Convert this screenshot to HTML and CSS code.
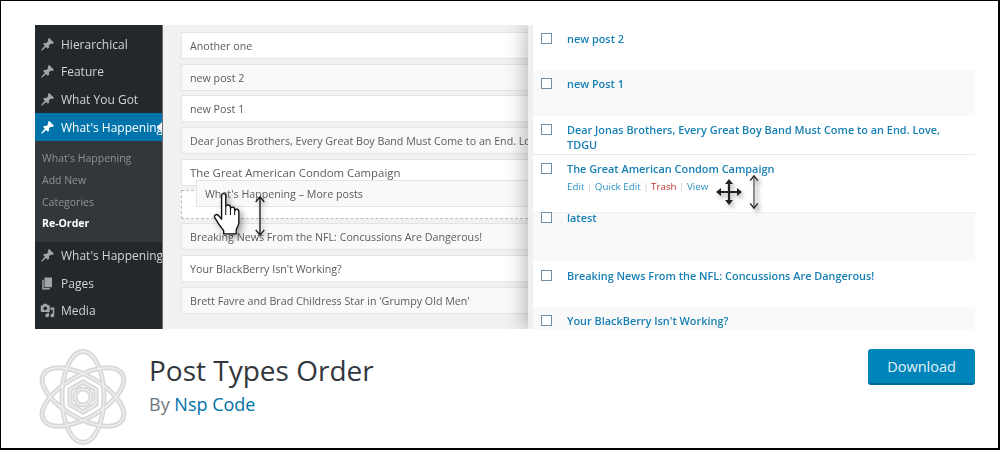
FILE: index.html
```html
<!DOCTYPE html>
<html lang="en">
<head>
<meta charset="utf-8">
<title>Post Types Order</title>
<link rel="stylesheet" href="styles.css">
</head>
<body>
<div class="frame">
  <svg width="0" height="0" class="defs">
    <defs>
      <path id="pin" d="M10.44 3.02l1.82-1.82 6.36 6.35-1.83 1.82c-1.05-.68-2.48-.57-3.41.36l-.75.75c-.92.93-1.04 2.35-.35 3.41l-1.83 1.82-2.41-2.41-2.8 2.79c-.42.42-3.38 2.71-3.8 2.29s1.86-3.39 2.28-3.81l2.79-2.79L4.1 9.36l1.83-1.82c1.05.69 2.48.57 3.4-.36l.75-.75c.93-.92 1.05-2.35.36-3.41z"/>
    </defs>
  </svg>
  <div class="banner">
    <nav class="sidebar">
      <div class="menu-item"><svg class="mi" viewBox="0 0 20 20"><use href="#pin"/></svg><span>Hierarchical</span></div>
      <div class="menu-item"><svg class="mi" viewBox="0 0 20 20"><use href="#pin"/></svg><span>Feature</span></div>
      <div class="menu-item"><svg class="mi" viewBox="0 0 20 20"><use href="#pin"/></svg><span>What You Got</span></div>
      <div class="menu-item active"><svg class="mi" viewBox="0 0 20 20"><use href="#pin"/></svg><span>What's Happening</span></div>
      <div class="submenu">
        <div class="sub-item">What's Happening</div>
        <div class="sub-item">Add New</div>
        <div class="sub-item">Categories</div>
        <div class="sub-item current">Re-Order</div>
      </div>
      <div class="menu-item"><svg class="mi" viewBox="0 0 20 20"><use href="#pin"/></svg><span>What's Happening</span></div>
      <div class="menu-item"><svg class="mi" viewBox="0 0 20 20"><path d="M6 15V2h10v13H6zm-1 1h8v2H3V5h2v11z"/></svg><span>Pages</span></div>
      <div class="menu-item"><svg class="mi" viewBox="0 0 20 20"><path d="M13 11V4c0-.55-.45-1-1-1h-1.67L9 1H5L3.67 3H2c-.55 0-1 .45-1 1v7c0 .55.45 1 1 1h10c.55 0 1-.45 1-1zM7 4.5c1.38 0 2.5 1.12 2.5 2.5S8.38 9.5 7 9.5 4.5 8.38 4.5 7 5.62 4.5 7 4.5zM14 6h5v10.5c0 1.38-1.12 2.5-2.5 2.5S14 17.88 14 16.5s1.12-2.5 2.5-2.5c.17 0 .34.02.5.05V9h-3V6zm-4 8.05V13h2v3.5c0 1.38-1.12 2.5-2.5 2.5S7 17.88 7 16.5 8.12 14 9.5 14c.17 0 .34.02.5.05z"/></svg><span>Media</span></div>
    </nav>

    <section class="order">
      <div class="card">Another one</div>
      <div class="card alt">new post 2</div>
      <div class="card">new Post 1</div>
      <div class="card alt">Dear Jonas Brothers, Every Great Boy Band Must Come to an End. Love, TDGU</div>
      <div class="card wide">The Great American Condom Campaign</div>
      <div class="placeholder"></div>
      <div class="card alt">Breaking News From the NFL: Concussions Are Dangerous!</div>
      <div class="card">Your BlackBerry Isn't Working?</div>
      <div class="card alt">Brett Favre and Brad Childress Star in 'Grumpy Old Men'</div>
      <div class="card dragged">What's Happening – More posts</div>
    </section>

    <section class="list">
      <div class="row r1"><i class="check"></i><div class="title">new post 2</div></div>
      <div class="row r2 odd"><i class="check"></i><div class="title">new Post 1</div></div>
      <div class="row r3"><i class="check"></i><div class="title">Dear Jonas Brothers, Every Great Boy Band Must Come to an End. Love, TDGU</div></div>
      <div class="row r4"><i class="check"></i><div><div class="title">The Great American Condom Campaign</div>
        <div class="actions"><span>Edit</span><b>|</b><span>Quick Edit</span><b>|</b><span class="trash">Trash</span><b>|</b><span>View</span></div></div></div>
      <div class="row r5 odd"><i class="check"></i><div class="title">latest</div></div>
      <div class="row r6"><i class="check"></i><div class="title">Breaking News From the NFL: Concussions Are Dangerous!</div></div>
      <div class="row r7 odd"><i class="check"></i><div class="title">Your BlackBerry Isn't Working?</div></div>
    </section>

    <svg class="cursor hand" viewBox="0 0 36 44">
      <path class="hand-path" d="M9 3.5c0-2.600 4-2.600 4 0V14c0-2.200 4.500-2.200 4.500 .5V16c0-2.200 4-2.200 4 .5V18c0-2.200 4-2 4 .8V29c0 3-1.500 5-2.500 7v4H11v-3c-2-2.500-6-8-8.500-12.500-1.300-2.500 1.700-4 3.500-2l3 3.500z"/>
      <path class="hand-line" d="M13 14v8M17.500 15v7M21.500 17v5"/>
    </svg>
    <svg class="cursor arrow-a" viewBox="0 0 14 44">
      <path class="arr" d="M7 2V42M2.500 7.500L7 2l4.500 5.500M2.500 36.500L7 42l4.500-5.500"/>
    </svg>
    <svg class="cursor arrow-b" viewBox="0 0 14 40">
      <path class="arr-gray" d="M7 3V37"/>
      <path class="arr" d="M3 8L7 3l4 5M3 32l4 5 4-5"/>
    </svg>
    <svg class="cursor move" viewBox="0 0 28 28">
      <path class="mv" d="M14 3V25M3 14H25"/>
      <path class="mvh" d="M14 1l-4 5h8zM14 27l-4-5h8zM1 14l5-4v8zM27 14l-5-4v8z"/>
    </svg>
  </div>

  <footer class="plugin">
    <svg class="atom" viewBox="0 0 96 96" aria-hidden="true">
      <g class="ring-o">
        <ellipse cx="48" cy="48" rx="21" ry="45.500"/>
        <ellipse cx="48" cy="48" rx="21" ry="45.500" transform="rotate(60 48 48)"/>
        <ellipse cx="48" cy="48" rx="21" ry="45.500" transform="rotate(-60 48 48)"/>
        <path d="M48 33l13 7.500v15L48 63l-13-7.500v-15z"/>
        <circle cx="48" cy="48" r="8"/>
      </g>
      <g class="ring-i">
        <ellipse cx="48" cy="48" rx="21" ry="45.500"/>
        <ellipse cx="48" cy="48" rx="21" ry="45.500" transform="rotate(60 48 48)"/>
        <ellipse cx="48" cy="48" rx="21" ry="45.500" transform="rotate(-60 48 48)"/>
        <path d="M48 33l13 7.500v15L48 63l-13-7.500v-15z"/>
        <circle cx="48" cy="48" r="8"/>
      </g>
    </svg>
    <div class="info">
      <h1 class="name">Post Types Order</h1>
      <p class="by">By <a class="author">Nsp Code</a></p>
    </div>
    <button class="download">Download</button>
  </footer>
</div>
</body>
</html>
```
FILE: styles.css
```css
* { box-sizing: border-box; }
html, body { margin: 0; padding: 0; background: #fff; }
body { font-family: "Open Sans", "Noto Sans", sans-serif; }
.defs { position: absolute; }
.frame {
  width: 1000px;
  height: 450px;
  border: 1px solid #000;
  border-bottom-width: 2px;
  border-right-width: 2px;
  padding: 24px 23px 0 34px;
  overflow: hidden;
}
.banner {
  position: relative;
  display: flex;
  width: 940px;
  height: 304px;
  overflow: hidden;
  filter: blur(.7px);
  background: #f1f1f1;
}

/* sidebar */
.sidebar {
  width: 128px;
  flex: none;
  background: #23282d;
  border-right: 1px solid #6b6e71;
  padding-top: 5.500px;
  font-size: 12px;
  color: #d2d4d6;
}
.menu-item {
  position: relative;
  height: 27.500px;
  display: flex;
  align-items: center;
  padding-left: 5px;
  white-space: nowrap;
  overflow: hidden;
}
.menu-item span { margin-left: 6px; }
.mi { width: 15px; height: 15px; flex: none; fill: #a0a5aa; }
.active { background: #0073aa; color: #fff; height: 28px; overflow: hidden; }
.active .mi { fill: #fff; }
.active::after {
  content: "";
  position: absolute;
  right: 0;
  top: 9px;
  border: 5px solid transparent;
  border-right-color: #f1f1f1;
  border-left-width: 0;
}
.submenu {
  background: #32373c;
  padding: 7px 0 0 7px;
  height: 101px;
  font-size: 10.500px;
  color: #8f9295;
}
.sub-item { height: 21.800px; line-height: 21px; white-space: nowrap; }
.current { color: #fff; font-weight: 700; }

/* drag list */
.order {
  position: relative;
  width: 365px;
  flex: none;
  padding: 7px 0 0 18px;
  background: #f1f1f1;
}
.card {
  height: 27px;
  margin-bottom: 4.700px;
  padding-left: 8px;
  line-height: 26px;
  font-size: 10.700px;
  color: #5c5c5c;
  background: #fff;
  border: 1px solid #e5e5e5;
  border-right: 0;
  white-space: nowrap;
  overflow: hidden;
}
.wide { font-size: 11.400px; }
.alt { background: #f9f9f9; }
.placeholder {
  height: 29px;
  margin: 1.500px 0 4px;
  border: 1.500px dashed #bdbdbd;
  border-right: 0;
  background: #fff;
}
.dragged {
  position: absolute;
  left: 33px;
  top: 155px;
  right: 0;
  background: #f9f9f9;
}

/* post list */
.list {
  position: relative;
  flex: 1;
  margin-left: 5px;
  background: #fff;
  font-size: 10.900px;
  box-shadow: -5px 0 0 #f0f0f0, -9px 0 18px rgba(0,0,0,.26);
}
.row { display: flex; align-items: flex-start; padding: 6px 20px 0 8px; }
.odd { background: #f9f9f9; }
.r1 { height: 45px; }
.r2 { height: 46px; }
.r3 { height: 39px; border-bottom: 1px solid #e8e8e8; }
.r4 { height: 58px; border-bottom: 1px solid #f0f0f0; }
.r5 { height: 48px; padding-top: 0; }
.r5 .title { margin-top: -3px; }
.r5 .check { margin-top: -1px; }
.r6 { height: 46px; padding-top: 7px; }
.r7 { height: 30px; }
.check {
  flex: none;
  width: 11px;
  height: 11px;
  margin: 2px 15px 0 0;
  border: 1.500px solid #6f8fa9;
  background: #fff;
}
.title { color: #167fb4; font-weight: 600; line-height: 15px; }
.actions { display: flex; margin-top: 4px; font-size: 9.800px; line-height: 14px; color: #2b93c2; }
.actions b { font-weight: 400; color: #ccc; margin: 0 2.500px; }
.trash { color: #c8302f; }

/* cursors */
.cursor { position: absolute; overflow: visible; }
.hand { left: 177px; top: 167px; width: 38px; height: 46px; filter: drop-shadow(3px 3px 3px rgba(0,0,0,.35)); }
.hand-path { fill: #fff; stroke: #111; stroke-width: 1.300; stroke-linejoin: round; }
.hand-line { fill: none; stroke: #111; stroke-width: 1; }
.arrow-a { left: 218px; top: 170px; width: 14px; height: 42px; filter: drop-shadow(2px 2px 2px rgba(0,0,0,.3)); }
.arrow-b { left: 712px; top: 148px; width: 14px; height: 38px; filter: drop-shadow(3px 3px 2px rgba(0,0,0,.35)); }
.arr { fill: none; stroke: #222; stroke-width: 1.500; }
.arr-gray { fill: none; stroke: #888; stroke-width: 2; }
.move { left: 680px; top: 153px; width: 28px; height: 28px; filter: drop-shadow(2px 3px 2px rgba(0,0,0,.3)); }
.mv { fill: none; stroke: #222; stroke-width: 2.200; }
.mvh { fill: #222; }

/* plugin header */
.plugin { display: flex; align-items: flex-start; padding-top: 20px; }
.atom { width: 96px; height: 96px; flex: none; }
.ring-o, .ring-i { fill: none; }
.ring-o { stroke: #d8d8d8; stroke-width: 5; }
.ring-i { stroke: #efefef; stroke-width: 1.500; }
.info { margin: -1px 0 0 18px; }
.name {
  margin: 0;
  font-size: 28px;
  line-height: 44px;
  font-weight: 400;
  color: #32373c;
}
.by { margin: 0; font-size: 18px; line-height: 24px; color: #72777c; }
.author { color: #0073aa; }
.download {
  margin-left: auto;
  width: 107px;
  height: 36px;
  padding: 1px 0 0;
  font-family: inherit;
  font-size: 14.500px;
  color: #e4f2f9;
  background: #0085ba;
  border: 0;
  border-bottom: 2px solid #006799;
  border-radius: 3px;
}
```
